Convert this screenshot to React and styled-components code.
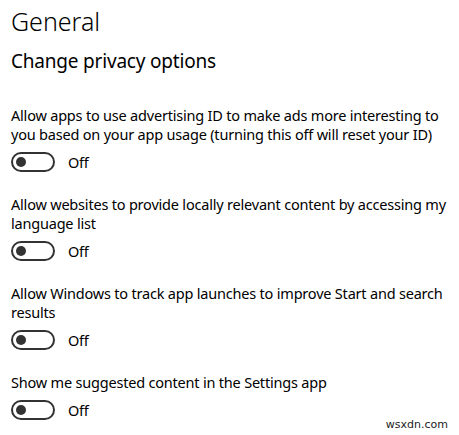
import React, { useState } from "react"
import styled, { createGlobalStyle } from "styled-components"

const GlobalStyle = createGlobalStyle`
  body {
    margin: 0;
    background: #ffffff;
    font-family: "Noto Sans", "Open Sans", sans-serif;
    color: #000000;
  }
`

const Page = styled.div`
  position: relative;
  width: 459px;
  height: 435px;
  padding: 4px 11px 0;
  box-sizing: border-box;
  overflow: hidden;
`
const Title = styled.h1`
  font-size: 25px;
  font-weight: 300;
  margin: 0;
  line-height: 34px;
`
const SubTitle = styled.h2`
  font-size: 19px;
  font-weight: 400;
  letter-spacing: -0.2px;
  margin: 10px 0 32px;
  line-height: 26px;
`
const Option = styled.div`
  display: flex;
  flex-direction: column;
  margin-bottom: 23px;
`
const Label = styled.p`
  margin: 0;
  font-size: 14.5px;
  line-height: 19px;
  letter-spacing: -0.2px;
  white-space: nowrap;
`
const ToggleRow = styled.div`
  display: flex;
  align-items: center;
  gap: 13px;
  height: 20px;
  margin-top: 8px;
  cursor: pointer;
`
const Track = styled.div`
  width: 44px;
  height: 20px;
  box-sizing: border-box;
  border: 2px solid ${(p) => (p.$on ? "#0078d7" : "#333333")};
  background: ${(p) => (p.$on ? "#0078d7" : "#ffffff")};
  border-radius: 10px;
  display: flex;
  align-items: center;
  justify-content: ${(p) => (p.$on ? "flex-end" : "flex-start")};
  padding: 0 3px;
`
const Knob = styled.span`
  width: 10px;
  height: 10px;
  border-radius: 50%;
  background: ${(p) => (p.$on ? "#ffffff" : "#333333")};
`
const State = styled.span`
  font-size: 14.5px;
  letter-spacing: -0.3px;
`
const Watermark = styled.span`
  position: absolute;
  right: 11px;
  bottom: 4px;
  font-family: "DejaVu Sans", sans-serif;
  font-size: 11px;
  color: #222222;
`

const options = [
  [
    "Allow apps to use advertising ID to make ads more interesting to",
    "you based on your app usage (turning this off will reset your ID)",
  ],
  [
    "Allow websites to provide locally relevant content by accessing my",
    "language list",
  ],
  ["Allow Windows to track app launches to improve Start and search", "results"],
  ["Show me suggested content in the Settings app"],
]

const Toggle = ({ lines }) => {
  const [on, setOn] = useState(false)
  return (
    <Option>
      <Label>
        {lines.map((l, i) => (
          <React.Fragment key={i}>
            {i > 0 && <br />}
            {l}
          </React.Fragment>
        ))}
      </Label>
      <ToggleRow onClick={() => setOn(!on)}>
        <Track $on={on}>
          <Knob $on={on} />
        </Track>
        <State>{on ? "On" : "Off"}</State>
      </ToggleRow>
    </Option>
  )
}

export default function App() {
  return (
    <>
      <GlobalStyle />
      <Page>
        <Title>General</Title>
        <SubTitle>Change privacy options</SubTitle>
        {options.map((o) => (
          <Toggle key={o[0]} lines={o} />
        ))}
        <Watermark>wsxdn.com</Watermark>
      </Page>
    </>
  )
}
